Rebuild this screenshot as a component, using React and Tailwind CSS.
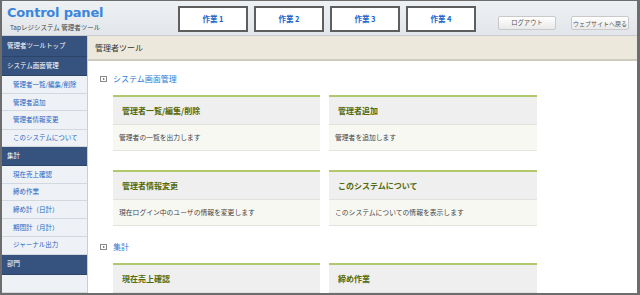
import React from "react";

const jp = { fontFamily: '"Noto Sans CJK JP", "Noto Sans", sans-serif' };

function NavTop({ children, h }) {
  return (
    <div className={`flex items-center pl-[5px] text-[6.5px] text-white bg-[#36527f] border-b border-[#2c4468] ${h}`}>
      {children}
    </div>
  );
}
function NavSub({ children, h }) {
  return (
    <div className={`flex items-center pl-[11px] text-[6.5px] text-[#2566c4] bg-[#eef1f5] border-b border-[#d3d8df] ${h}`}>
      {children}
    </div>
  );
}

function SectionTitle({ children, className = "" }) {
  return (
    <div className={`flex items-center h-[12px] pl-[12px] ${className}`}>
      <div className="w-[7px] h-[6px] border border-[#8a8a8a] bg-white flex items-center justify-center mr-[6px]">
        <div className="w-0 h-0 border-y-[1.5px] border-y-transparent border-l-[2.5px] border-l-[#555]" />
      </div>
      <span className="text-[8px] text-[#2b7bd8]">{children}</span>
    </div>
  );
}

function Card({ title, body, w }) {
  return (
    <div className={`${w} flex flex-col`}>
      <div className="h-[30px] bg-[#efefef] border-t-2 border-[#b2c86c] flex items-center pl-[9px] border-b border-b-[#e2e2dc]">
        <span className="text-[8px] font-bold text-[#546a0a]">{title}</span>
      </div>
      {body && (
        <div className="h-[26px] bg-[#f8f8f3] flex items-center pl-[6px] border-b border-[#e4e4de]">
          <span className="text-[6.8px] text-[#444]">{body}</span>
        </div>
      )}
    </div>
  );
}

export default function App() {
  return (
    <div style={jp} className="w-[640px] h-[295px] bg-[#6d6d6d] pt-[1px] pl-[2px] pr-[3px] pb-[2px] overflow-hidden">
      <div className="w-full h-full flex flex-col bg-white overflow-hidden">
        {/* Header */}
        <div className="h-[35px] shrink-0 bg-gradient-to-b from-[#eef1f4] to-[#e2e6ea] border-b border-[#c8ccd0] flex items-start">
          <div className="w-[170px] pl-[5px] pt-[4px]">
            <div
              className="text-[13px] font-bold leading-[16px] tracking-[-0.2px] text-[#3a86dc]"
              style={{ fontFamily: '"DejaVu Sans", "Liberation Sans", sans-serif' }}
            >
              Control panel
            </div>
            <div className="text-[6.5px] text-[#444] mt-[2px] pl-[3px]">Tapレジシステム 管理者ツール</div>
          </div>
          <div className="flex gap-[6px] pt-[5px] pl-[6px]">
            {["作業 1", "作業 2", "作業 3", "作業 4"].map((t) => (
              <div
                key={t}
                className="w-[70px] h-[26px] bg-white border-2 border-[#5e5e5e] flex items-center justify-center text-[7.5px] font-bold text-[#2062c8]"
              >
                {t}
              </div>
            ))}
          </div>
          <div className="flex gap-[15px] pt-[15px] pl-[22px]">
            <div className="w-[58px] h-[14px] rounded-[2px] border border-[#c9c9c9] bg-gradient-to-b from-white to-[#e9e9e9] flex items-center justify-center text-[6.3px] text-[#555]">
              ログアウト
            </div>
            <div className="w-[58px] h-[14px] rounded-[2px] border border-[#c9c9c9] bg-gradient-to-b from-white to-[#e9e9e9] flex items-center justify-center text-[6px] text-[#555]">
              ウェブサイトへ戻る
            </div>
          </div>
        </div>
        {/* Body */}
        <div className="flex flex-1 min-h-0">
          <div className="w-[86px] shrink-0 bg-[#eef1f5] flex flex-col border-r border-[#c9ced6]">
            <NavTop h="h-[22px]">管理者ツールトップ</NavTop>
            <NavTop h="h-[20px]">システム画面管理</NavTop>
            <NavSub h="h-[19px]">管理者一覧/編集/削除</NavSub>
            <NavSub h="h-[18px]">管理者追加</NavSub>
            <NavSub h="h-[19px]">管理者情報変更</NavSub>
            <NavSub h="h-[18px]">このシステムについて</NavSub>
            <NavTop h="h-[20px]">集計</NavTop>
            <NavSub h="h-[19px]">現在売上確認</NavSub>
            <NavSub h="h-[18px]">締め作業</NavSub>
            <NavSub h="h-[19px]">締め計（日計）</NavSub>
            <NavSub h="h-[18px]">期間計（月計）</NavSub>
            <NavSub h="h-[19px]">ジャーナル出力</NavSub>
            <NavTop h="h-[21px]">部門</NavTop>
            <NavSub h="h-[19px]"> </NavSub>
          </div>
          <div className="flex-1 flex flex-col">
            <div className="h-[25px] shrink-0 bg-[#ece8dc] border-b-2 border-[#cfcbbf] flex items-center pl-[7px] text-[8px] text-[#333]">
              管理者ツール
            </div>
            <SectionTitle className="mt-[12px]">システム画面管理</SectionTitle>
            <div className="flex gap-[9px] pl-[25px] mt-[10px]">
              <Card w="w-[207px]" title="管理者一覧/編集/削除" body="管理者の一覧を出力します" />
              <Card w="w-[208px]" title="管理者追加" body="管理者を追加します" />
            </div>
            <div className="flex gap-[9px] pl-[25px] mt-[19px]">
              <Card w="w-[207px]" title="管理者情報変更" body="現在ログイン中のユーザの情報を変更します" />
              <Card w="w-[208px]" title="このシステムについて" body="このシステムについての情報を表示します" />
            </div>
            <SectionTitle className="mt-[15px]">集計</SectionTitle>
            <div className="flex gap-[9px] pl-[25px] mt-[10px]">
              <Card w="w-[207px]" title="現在売上確認" />
              <Card w="w-[208px]" title="締め作業" />
            </div>
          </div>
        </div>
      </div>
    </div>
  );
}
